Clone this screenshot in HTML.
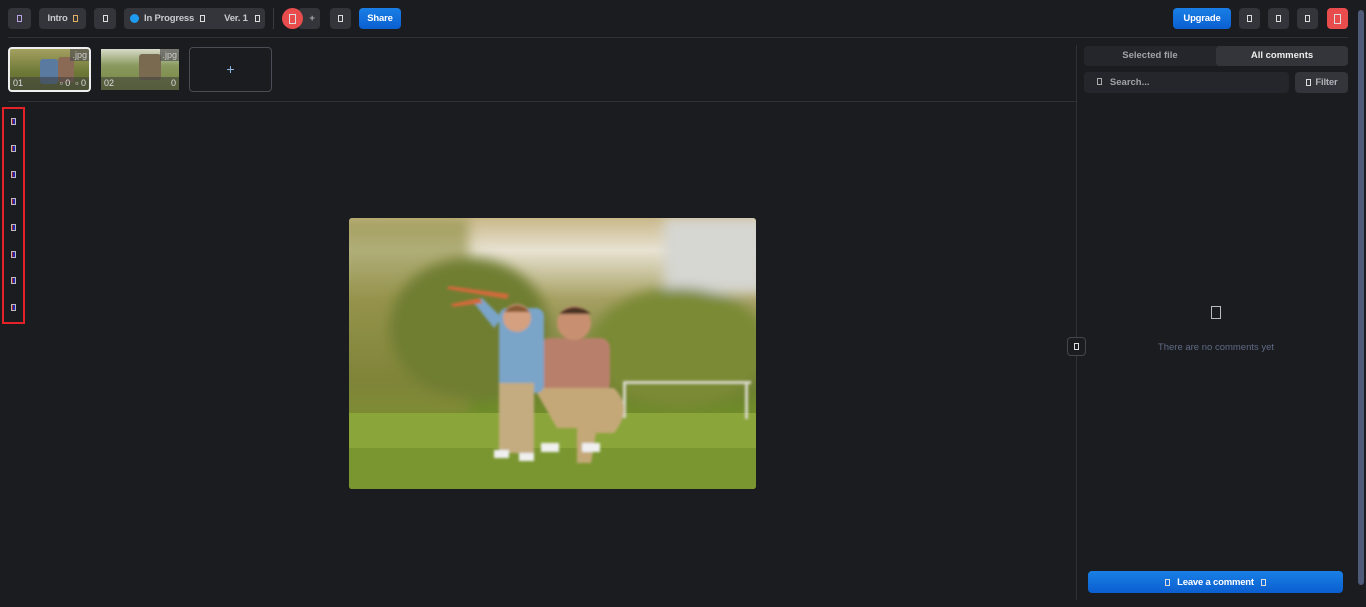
<!DOCTYPE html>
<html><head><meta charset="utf-8"><style>
*{box-sizing:border-box;margin:0;padding:0}
body{width:1366px;height:607px;background:#1b1c20;font-family:"Liberation Sans",sans-serif;overflow:hidden;position:relative;color:#cfd2da}
.a{position:absolute}
.btn{position:absolute;background:#34353b;border-radius:4px;height:21px;top:8px;font-size:9.5px;font-weight:bold;color:#c8cad0;display:flex;align-items:center;justify-content:center;white-space:nowrap;letter-spacing:-0.2px}
.ic{display:inline-block;width:5px;height:7px;border:1px solid #ddd;flex:none}
.blue{background:linear-gradient(#1a7fe6,#0a5fd0);color:#fff}
.hr{position:absolute;height:1px;background:#303136}
</style></head><body>
<div class="btn" style="left:8px;width:23px"><span class="ic" style="border-color:#b9a0e0"></span></div>
<div class="btn" style="left:39px;width:47px">Intro&nbsp;&nbsp;<span class="ic" style="border-color:#e0b060"></span></div>
<div class="btn" style="left:94px;width:22px"><span class="ic"></span></div>
<div class="btn" style="left:124px;width:141px;justify-content:flex-start;padding-left:6px"><span style="width:9px;height:9px;border-radius:50%;background:#1e9bf0;display:inline-block;margin-right:5px;flex:none"></span>In Progress<span class="ic" style="margin-left:6px"></span><span style="margin-left:19px">Ver. 1</span><span class="ic" style="margin-left:7px"></span></div>
<div class="a" style="left:273px;top:8px;width:1px;height:21px;background:#3a3b40"></div>
<div class="btn" style="left:298px;width:22px;color:#aaa;padding-left:6px">+</div>
<div class="btn" style="left:282px;width:21px;border-radius:50%;background:#e84c4c"><span class="ic" style="width:7px;height:10px"></span></div>
<div class="btn" style="left:330px;width:21px"><span class="ic"></span></div>
<div class="btn blue" style="left:359px;width:42px">Share</div>
<div class="btn blue" style="left:1173px;width:58px">Upgrade</div>
<div class="btn" style="left:1239px;width:21px"><span class="ic"></span></div>
<div class="btn" style="left:1268px;width:21px"><span class="ic"></span></div>
<div class="btn" style="left:1297px;width:21px"><span class="ic"></span></div>
<div class="btn" style="left:1327px;width:21px;background:#e84c4c"><span class="ic" style="width:7px;height:10px"></span></div>
<div class="hr" style="left:8px;top:37px;width:1340px"></div>
<div class="a" style="left:8px;top:47px;width:83px;height:45px;border:2px solid #eee;border-radius:4px;overflow:hidden;background:linear-gradient(#a4a060,#6f7a38 55%,#5c6a30)">
<div class="a" style="left:30px;top:10px;width:18px;height:25px;background:#5a7aa0;border-radius:3px"></div>
<div class="a" style="left:48px;top:8px;width:16px;height:26px;background:#8a6a55;border-radius:3px"></div>
<div class="a" style="left:0;bottom:0;width:100%;height:13px;background:rgba(60,60,60,.55);font-size:9px;color:#ddd;padding:1px 3px">01<span style="float:right">▫ 0 &nbsp;▫ 0</span></div>
<div class="a" style="right:0;top:0;background:rgba(80,80,80,.7);font-size:9px;color:#ccc;padding:1px 2px">.jpg</div></div>
<div class="a" style="left:101px;top:49px;width:78px;height:41px;overflow:hidden;background:linear-gradient(#d8dbc8,#8a9a60 40%,#74843c)">
<div class="a" style="left:38px;top:5px;width:22px;height:26px;background:#7a6a50;border-radius:3px"></div>
<div class="a" style="left:0;bottom:0;width:100%;height:13px;background:rgba(60,60,60,.55);font-size:9px;color:#ddd;padding:1px 3px">02<span style="float:right">0</span></div>
<div class="a" style="right:0;top:0;background:rgba(80,80,80,.7);font-size:9px;color:#ccc;padding:1px 2px">.jpg</div></div>
<div class="a" style="left:189px;top:47px;width:83px;height:45px;border:1px solid #4a4c55;border-radius:4px;text-align:center;line-height:43px;color:#8fb8e0;font-size:14px">+</div>
<div class="hr" style="left:8px;top:101px;width:1068px"></div>
<div class="a" style="left:2px;top:107px;width:23px;height:217px;border:2px solid #e42228"></div>
<div class="a" style="left:11px;top:112px">
<div style="height:26.5px"><span class="ic" style="border-color:#bbb;background:linear-gradient(90deg,#a22 40%,#22a 40%)"></span></div>
<div style="height:26.5px"><span class="ic" style="border-color:#bbb;background:linear-gradient(90deg,#a22 40%,#22a 40%)"></span></div>
<div style="height:26.5px"><span class="ic" style="border-color:#bbb;background:linear-gradient(90deg,#a22 40%,#22a 40%)"></span></div>
<div style="height:26.5px"><span class="ic" style="border-color:#bbb;background:linear-gradient(90deg,#a22 40%,#22a 40%)"></span></div>
<div style="height:26.5px"><span class="ic" style="border-color:#bbb;background:linear-gradient(90deg,#a22 40%,#22a 40%)"></span></div>
<div style="height:26.5px"><span class="ic" style="border-color:#bbb;background:linear-gradient(90deg,#a22 40%,#22a 40%)"></span></div>
<div style="height:26.5px"><span class="ic" style="border-color:#bbb;background:linear-gradient(90deg,#a22 40%,#22a 40%)"></span></div>
<div style="height:26.5px"><span class="ic" style="border-color:#bbb;background:linear-gradient(90deg,#a22 40%,#22a 40%)"></span></div>
</div>
<svg class="a" style="left:349px;top:218px;border-radius:3px" width="407" height="271" viewBox="0 0 407 271">
<defs><linearGradient id="s" x1="0" y1="0" x2="0" y2="1"><stop offset="0" stop-color="#c9b88a"/><stop offset=".12" stop-color="#e8e2d2"/><stop offset=".3" stop-color="#a6a062"/><stop offset=".6" stop-color="#6d7a34"/><stop offset=".7" stop-color="#6e8a2a"/><stop offset="1" stop-color="#7e9a2e"/></linearGradient>
<filter id="b"><feGaussianBlur stdDeviation="6"/></filter><filter id="b2"><feGaussianBlur stdDeviation="1.2"/></filter></defs>
<rect width="407" height="271" fill="url(#s)"/>
<g filter="url(#b)">
<rect x="-10" y="0" width="130" height="200" fill="#8a8a3a" opacity=".6"/>
<rect x="315" y="0" width="100" height="75" fill="#d6d6d2"/>
<ellipse cx="330" cy="130" rx="90" ry="60" fill="#7a8a36"/>
<ellipse cx="120" cy="110" rx="80" ry="70" fill="#6f7e30"/>
</g>
<rect x="0" y="195" width="407" height="76" fill="#8aa53a"/>
<rect x="0" y="230" width="407" height="41" fill="#7a9630"/>
<g filter="url(#b2)">
<rect x="274" y="163" width="128" height="3" fill="#d8d8c8"/><rect x="274" y="163" width="3" height="37" fill="#d8d8c8"/><rect x="396" y="163" width="3" height="38" fill="#d8d8c8"/>
<rect x="191" y="120" width="70" height="55" rx="10" fill="#b8806a"/>
<circle cx="225" cy="105" r="17" fill="#c89070"/><path d="M210 96 q15 -14 32 0" fill="#4a3020"/>
<path d="M185 170 h80 q20 20 0 45 h-18 l-5 30 h-14 l0 -35 h-20 z" fill="#c4a878"/>
<rect x="150" y="90" width="45" height="85" rx="8" fill="#7aa4c8"/><path d="M133 80 l20 20 l-8 10 l-20 -25z" fill="#7aa4c8"/>
<circle cx="168" cy="100" r="14" fill="#d4a080"/><path d="M155 94 q13 -14 26 0" fill="#8a5a30"/>
<rect x="150" y="165" width="35" height="70" fill="#c4ac80"/>
<rect x="145" y="232" width="15" height="8" fill="#f0f0f0"/><rect x="170" y="235" width="15" height="8" fill="#f0f0f0"/><rect x="192" y="225" width="18" height="9" fill="#f0f0f0"/><rect x="233" y="225" width="18" height="9" fill="#f0f0f0"/>
<path d="M98 71 l60 10 l2 -5 l-60 -8z M130 80 l-28 6 l2 3 l30 -4z" fill="#d06a3a"/>
</g>
</svg>
<div class="a" style="left:1076px;top:45px;width:1px;height:555px;background:#303136"></div>
<div class="a" style="left:1067px;top:337px;width:19px;height:19px;border:1px solid #44464c;border-radius:4px;background:#1b1c20;display:flex;align-items:center;justify-content:center"><span class="ic"></span></div>
<div class="a" style="left:1084px;top:46px;width:264px;height:20px;background:#25262b;border-radius:4px"></div>
<div class="a" style="left:1216px;top:46px;width:132px;height:20px;background:#34353b;border-radius:4px;font-size:9.5px;font-weight:bold;color:#eee;text-align:center;line-height:20px">All comments</div>
<div class="a" style="left:1084px;top:46px;width:132px;font-size:9.5px;font-weight:bold;color:#a0a2aa;text-align:center;line-height:20px">Selected file</div>
<div class="a" style="left:1084px;top:72px;width:205px;height:21px;background:#25262b;border-radius:4px;font-size:9.5px;font-weight:bold;color:#a0a2aa;line-height:21px;padding-left:13px"><span class="ic" style="border-color:#aaa"></span>&nbsp;&nbsp;&nbsp;Search...</div>
<div class="btn" style="left:1295px;top:72px;width:53px;color:#b0b2ba"><span class="ic"></span>&nbsp;&nbsp;Filter</div>
<div class="a" style="left:1211px;top:306px;width:10px;height:13px;border:1px solid #bbb"></div>
<div class="a" style="left:1084px;top:342px;width:264px;text-align:center;font-size:9.5px;color:#5f6a84">There are no comments yet</div>
<div class="btn blue" style="left:1088px;top:571px;width:255px;height:22px"><span class="ic"></span>&nbsp;&nbsp;&nbsp;Leave a comment&nbsp;&nbsp;&nbsp;<span class="ic"></span></div>
<div class="a" style="left:1358px;top:10px;width:6px;height:575px;background:#4f5a78;border-radius:3px"></div>
</body></html>
